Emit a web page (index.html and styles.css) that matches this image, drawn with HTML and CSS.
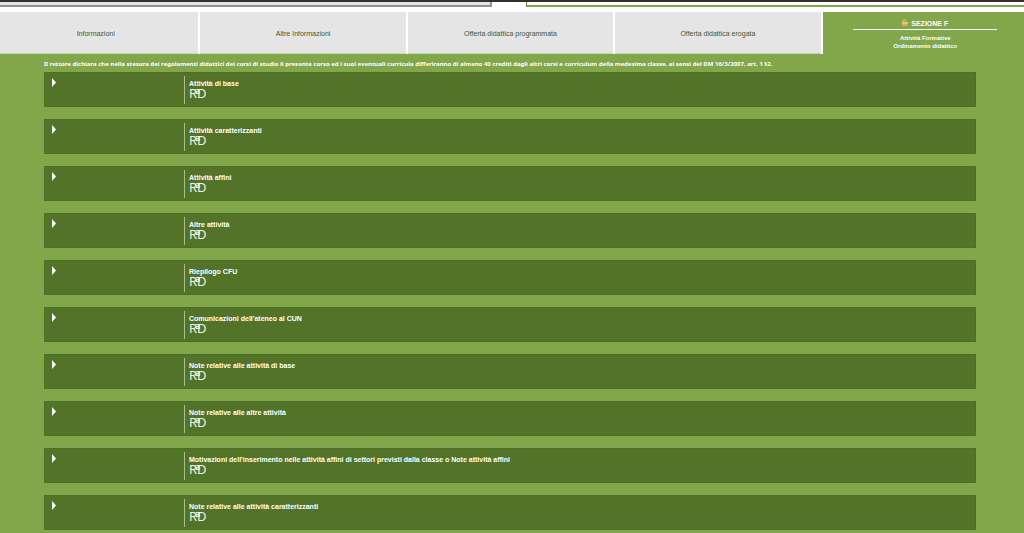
FILE: index.html
```
<!DOCTYPE html>
<html lang="it">
<head>
<meta charset="utf-8">
<title>Attività Formative - Ordinamento didattico</title>
<link rel="stylesheet" href="styles.css">
</head>
<body>
<header class="top">
  <div class="top-left"></div>
  <div class="top-right"></div>
</header>
<nav class="tabs">
  <a class="tab" href="#info">Informazioni</a>
  <a class="tab" href="#altre">Altre Informazioni</a>
  <a class="tab" href="#programmata">Offerta didattica programmata</a>
  <a class="tab" href="#erogata">Offerta didattica erogata</a>
  <a class="tab tab-active" href="#sezione-f">
    <span class="tab-title"><svg class="lock" viewBox="0 0 7 7"><path d="M1 3V1.500Q2.500 0 4 1.500" fill="none" stroke="#d8d8a0"/><rect y="2.500" width="6" height="4.500" fill="#dba94a"/><path d="M0 4h6" stroke="#f4dc9a"/></svg> SEZIONE F</span>
    <span>Attività Formative</span>
    <span>Ordinamento didattico</span>
  </a>
</nav>
<main class="content">
  <p class="notice">Il rettore dichiara che nella stesura dei regolamenti didattici dei corsi di studio il presente corso ed i suoi eventuali curricula differiranno di almeno 40 crediti dagli altri corsi e curriculum della medesima classe, ai sensi del DM 16/3/2007, art. 1 §2.</p>
  <div class="sections" id="sections"></div>
</main>
<template id="row">
  <section class="row">
    <button class="toggle" type="button"><svg class="arrow" viewBox="0 0 4 9"><path d="M0 0L4 4.500L0 9Z" fill="#fff"/></svg></button>
    <div class="detail">
      <h2 class="title"></h2>
      <svg class="rad" viewBox="0 0 20 16" role="img" aria-label="RaD"><text x="0" y="10"><tspan class="rad-big">R</tspan><tspan class="rad-small" x="6" y="6">a</tspan><tspan class="rad-big" x="8" y="10">D</tspan></text></svg>
    </div>
  </section>
</template>
<script src="sections.js"></script>
</body>
</html>
```
FILE: styles.css
```
* {
  box-sizing: border-box;
}

body {
  margin: 0;
  min-height: 100vh;
  overflow-x: hidden;
  background: #82a64a;
  color: #fff;
  font-family: "Liberation Sans", Arial, sans-serif;
  font-size: 7px;
  line-height: 8px;
}

.top {
  display: flex;
  justify-content: space-between;
  height: 12px;
  border-top: 2px solid #343031;
  background: #fff;
}

.top-left,
.top-right {
  height: 5px;
}

.top-left {
  width: 48%;
  background: #e5e5e5;
  border-right: 2px solid #929292;
  border-bottom: 2px solid #929292;
}

.top-right {
  width: 48.6%;
  border-left: 1px solid #68863b;
  border-bottom: 2px solid #82a64a;
}

.tabs {
  display: grid;
  grid-template-columns: repeat(5, 1fr);
  gap: 2px;
  margin: 0 -4px 0 -7px;
  background: #fff;
}

.tab {
  display: flex;
  align-items: center;
  justify-content: center;
  height: 42px;
  padding-top: 2px;
  border-bottom: 1px solid #c5d7a8;
  background: #e5e5e5;
  color: #48562f;
  text-decoration: none;
}

.tab-active {
  flex-direction: column;
  border-bottom: 0;
  background: #82a64a;
  color: #fff;
  font-size: 6px;
  font-weight: bold;
}

.tab-title {
  width: 70%;
  margin-bottom: 4px;
  padding-bottom: 1px;
  border-bottom: 1px solid #fff;
  font-size: 7px;
  text-align: center;
}

.lock {
  width: 7px;
  height: 7px;
}

.content {
  padding: 6px 48px 0 44px;
}

.notice {
  margin: 0 0 4px;
  font-family: "Noto Sans", sans-serif;
  font-size: 6px;
  font-weight: bold;
}

.sections {
  display: grid;
  gap: 12px;
}

.row {
  display: flex;
  height: 35px;
  padding: 3px 0 2px;
  border: 1px solid #4c7023;
  background: #537428;
}

.toggle {
  display: flex;
  width: 139px;
  padding: 2px 7px;
  border: 0;
  background: none;
}

.arrow {
  width: 4px;
  height: 9px;
}

.detail {
  flex: 1;
  padding: 4px 0 0 4px;
  border-left: 1px solid #a9bf89;
}

.title {
  margin: 0;
  font-size: 7px;
  font-weight: bold;
}

.rad {
  display: block;
  width: 20px;
  height: 16px;
  overflow: visible;
  fill: #f4f7ee;
  font-family: "Open Sans", sans-serif;
}

.rad-big {
  font-size: 13px;
}

.rad-small {
  font-size: 9px;
  font-weight: bold;
}
```
FILE: sections.js
```
const titles = [
  "Attività di base",
  "Attività caratterizzanti",
  "Attività affini",
  "Altre attività",
  "Riepilogo CFU",
  "Comunicazioni dell'ateneo al CUN",
  "Note relative alle attività di base",
  "Note relative alle altre attività",
  "Motivazioni dell'inserimento nelle attività affini di settori previsti dalla classe o Note attività affini",
  "Note relative alle attività caratterizzanti"
];
const list = document.getElementById("sections");
const template = document.getElementById("row");
for (const title of titles) {
  const row = template.content.cloneNode(true);
  row.querySelector(".title").textContent = title;
  row.querySelector(".toggle").setAttribute("aria-label", "Apri " + title);
  list.append(row);
}
```
